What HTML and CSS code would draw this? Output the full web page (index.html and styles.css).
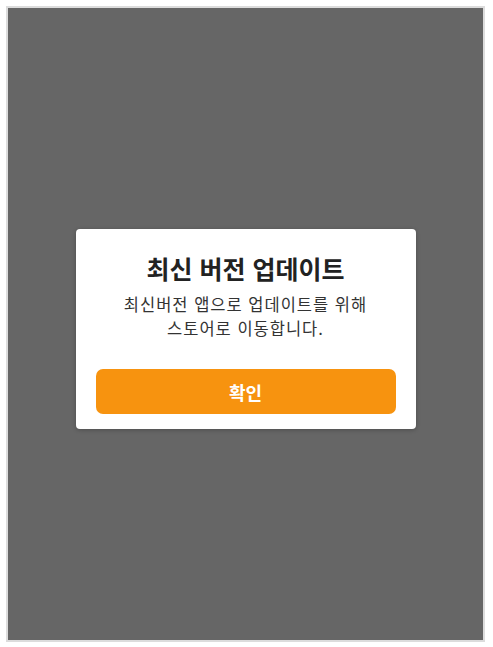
FILE: index.html
```html
<!DOCTYPE html>
<html lang="ko">
<head>
    <meta charset="UTF-8">
    <meta name="viewport" content="width=device-width, initial-scale=1.0">
    <title>최신 버전 업데이트</title>
    <link rel="stylesheet" href="styles.css">
</head>
<body>
    <div class="frame">
        <div class="dialog">
            <h2 class="dialog-title">최신 버전 업데이트</h2>
            <p class="dialog-text">최신버전 앱으로 업데이트를 위해<br>스토어로 이동합니다.</p>
            <button class="dialog-button">확인</button>
        </div>
    </div>
</body>
</html>
```

FILE: styles.css
```css
/* Update notice modal over dimmed screen */
body {
    margin: 0;
    font-family: "Noto Sans CJK KR", "Noto Sans", sans-serif;
    background-color: #fff;
}
.frame {
    margin: 6px 8px 5px 6px;
    height: 632px;
    border: 2px solid #dcdcdc;
    background-color: #666;
    display: flex;
    justify-content: center;
    align-items: center;
}
.dialog {
    width: 340px;
    height: 200px;
    box-sizing: border-box;
    margin-top: 10px;
    padding: 22px 20px 15px;
    background-color: #fff;
    border-radius: 4px;
    box-shadow: 0 1px 4px rgba(0, 0, 0, 0.25);
    display: flex;
    flex-direction: column;
    align-items: center;
}
.dialog-title {
    margin: 0;
    font-size: 25px;
    font-weight: bold;
    line-height: 34px;
    color: #222;
}
.dialog-text {
    margin: 7px 0 0;
    font-size: 16.5px;
    letter-spacing: 1px;
    line-height: 24px;
    color: #333;
    text-align: center;
}
.dialog-button {
    margin-top: auto;
    width: 100%;
    height: 45px;
    border: none;
    border-radius: 7px;
    background-color: #f7930f;
    color: #fff;
    font-family: inherit;
    font-size: 18px;
    font-weight: bold;
}
```
